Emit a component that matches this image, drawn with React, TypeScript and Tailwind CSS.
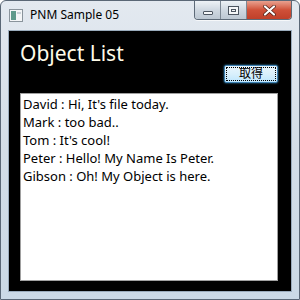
const FONT = "font-['Segoe_UI','Noto_Sans','Noto_Sans_CJK_JP',sans-serif]";

const messages = [
  "David : Hi, It's file today.",
  "Mark : too bad..",
  "Tom : It's cool!",
  "Peter : Hello! My Name Is Peter.",
  "Gibson : Oh! My Object is here.",
];

function AppIcon() {
  return (
    <svg width="14" height="13" viewBox="0 0 14 13" aria-hidden="true">
      <rect x="0.5" y="0.5" width="13" height="12" fill="#f4f6f8" stroke="#8a949c" />
      <rect x="2" y="2" width="5" height="9" fill="#5f9a8c" />
      <rect x="8" y="3" width="4" height="2" fill="#c9d2d8" />
    </svg>
  );
}

function CaptionButtons() {
  return (
    <div className="flex h-[19px] mr-[7px] rounded-b-[4px] border border-t-0 border-[#5d6a78] overflow-hidden shadow-[0_1px_0_rgba(255,255,255,0.7)]">
      <div className="w-[26px] flex items-center justify-center bg-gradient-to-b from-[#eef2f6] via-[#cfd8e1] to-[#bcc7d2] border-r border-[#7d8894]">
        <div className="w-[10px] h-[4px] mt-[5px] bg-[#f4f6f8] border border-[#4c5560] rounded-[1px]" />
      </div>
      <div className="w-[26px] flex items-center justify-center bg-gradient-to-b from-[#eef2f6] via-[#cfd8e1] to-[#bcc7d2] border-r border-[#7d8894]">
        <div className="w-[11px] h-[9px] border border-[#4c5560] bg-[#f4f6f8] flex items-center justify-center">
          <div className="w-[5px] h-[3px] border border-[#4c5560]" />
        </div>
      </div>
      <div className="w-[44px] flex items-center justify-center bg-gradient-to-b from-[#e8a08f] via-[#cf5038] to-[#c0402a]">
        <svg width="13" height="11" viewBox="0 0 13 11" aria-hidden="true">
          <path
            d="M2 1.5l9 8M11 1.5l-9 8"
            stroke="#4a1e16"
            strokeWidth="3.6"
            strokeLinecap="round"
          />
          <path
            d="M2 1.5l9 8M11 1.5l-9 8"
            stroke="#ffffff"
            strokeWidth="2.2"
            strokeLinecap="round"
          />
        </svg>
      </div>
    </div>
  );
}

export default function App() {
  return (
    <div
      className={`${FONT} w-[300px] h-[300px] flex flex-col bg-gradient-to-b from-[#e3e9f0] via-[#d3dde7] to-[#cbd9e6] border border-[#5a6776] rounded-t-[6px] overflow-hidden`}
    >
      {/* Title bar */}
      <div className="h-[29px] flex items-start shrink-0">
        <div className="flex items-center h-[28px] pl-[8px] gap-[7px] flex-1">
          <AppIcon />
          <span className="text-[12px] text-black leading-none">PNM Sample 05</span>
        </div>
        <CaptionButtons />
      </div>

      {/* Client area */}
      <div className="mx-[7px] flex-1 flex flex-col bg-black pl-[11px] pr-[13px] border border-[#9aabbc]">
        <div className="mt-[10px] h-[24px] leading-[24px] text-[21px] text-[#fffbe8]">
          Object List
        </div>
        <div className="flex justify-end h-[18px]">
          <button className="w-[54px] h-[18px] flex items-center justify-center text-[12px] text-black bg-gradient-to-b from-[#eaf6fd] via-[#d9f0fc] to-[#bee6fd] border border-[#3c7fb1] rounded-[2px] shadow-[0_0_2px_#41a5d8] outline-1 outline-dotted outline-offset-[-3px] outline-black">
            取得
          </button>
        </div>
        <div className="mt-[10px] mb-[10px] flex-1 bg-white border border-[#a0a0a0] pl-[2px] pt-[1px]">
          {messages.map((m) => (
            <div key={m} className="text-[13px] leading-[18px] text-black whitespace-nowrap">
              {m}
            </div>
          ))}
        </div>
      </div>

      {/* Bottom frame */}
      <div className="h-[7px] shrink-0" />
    </div>
  );
}
